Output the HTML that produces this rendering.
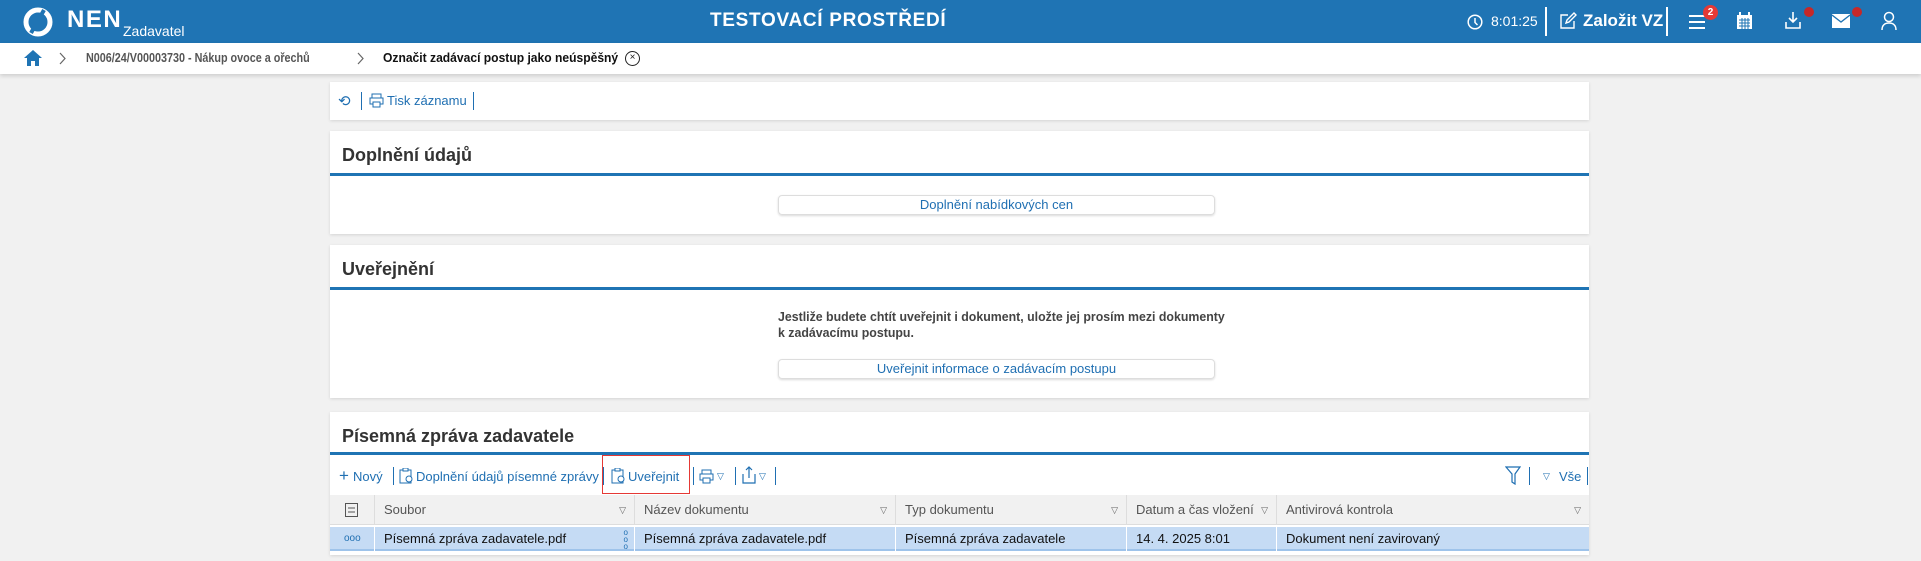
<!DOCTYPE html>
<html><head><meta charset="utf-8"><style>
*{box-sizing:border-box;margin:0;padding:0}
body{width:1921px;height:561px;background:#f1f1f1;font-family:"Liberation Sans Narrow","Liberation Sans",sans-serif;position:relative;overflow:hidden;color:#222}
.a{position:absolute;white-space:nowrap}
#hdr{position:absolute;left:0;top:0;width:1921px;height:43px;background:#1f74b4}
#bc{position:absolute;left:0;top:43px;width:1921px;height:31px;background:#fff;box-shadow:0 2px 4px rgba(0,0,0,.15)}
.panel{position:absolute;left:330px;width:1259px;background:#fff;box-shadow:0 1px 3px rgba(0,0,0,.12)}
.title{position:absolute;left:12px;font-size:18px;font-weight:bold;color:#333}
.bl{position:absolute;left:0;width:1259px;height:3px;background:#1f74b4}
.btn{position:absolute;left:448px;width:437px;height:20px;border:1px solid #ddd;border-radius:4px;box-shadow:0 1px 2px rgba(0,0,0,.15);text-align:center;font-size:13px;line-height:18px;color:#1f6fb2}
.blue{color:#1f6fb2}
.th{position:absolute;top:0;height:30px;border-right:1px solid #ddd;font-size:13px;color:#555;line-height:30px;padding-left:9px}
.td{position:absolute;top:0;height:24px;border-right:1px solid #fff;font-size:13px;color:#111;line-height:24px;padding-left:9px}
.tri{position:absolute;right:8px;font-size:9px;color:#666}
</style></head><body>
<div id="hdr">
 <svg class="a" style="left:23px;top:7px" width="30" height="30" viewBox="0 0 30 30"><circle cx="15" cy="15" r="12" fill="none" stroke="#fff" stroke-width="5"/><path d="M8 26 L21 3" stroke="#1f74b4" stroke-width="4"/></svg>
 <div class="a" style="left:67px;top:6px;color:#fff;font-size:24px;font-weight:bold;letter-spacing:1.5px;font-family:'Liberation Sans',sans-serif">NEN</div>
 <div class="a" style="left:123px;top:23px;color:#fff;font-size:14px">Zadavatel</div>
 <div class="a" style="left:710px;top:10px;color:#fff;font-size:19px;font-weight:bold;font-family:'Liberation Sans',sans-serif;letter-spacing:.7px">TESTOVACÍ PROSTŘEDÍ</div>
 <svg class="a" style="left:1467px;top:14px" width="16" height="16" viewBox="0 0 16 16"><circle cx="8" cy="8" r="6.8" fill="none" stroke="#fff" stroke-width="1.5"/><path d="M8 4v4.5l2.5 2.5" fill="none" stroke="#fff" stroke-width="1.5"/></svg>
 <div class="a" style="left:1491px;top:13px;color:#fff;font-size:14px">8:01:25</div>
 <div class="a" style="left:1545px;top:7px;width:2px;height:29px;background:#fff"></div>
 <svg class="a" style="left:1559px;top:12px" width="18" height="18" viewBox="0 0 18 18"><path d="M9 3H2v13h13V9M7 11l1-3 7-7 2 2-7 7z" fill="none" stroke="#fff" stroke-width="1.4"/></svg>
 <div class="a" style="left:1583px;top:11px;color:#fff;font-size:17px;font-weight:bold;font-family:'Liberation Sans',sans-serif">Založit VZ</div>
 <div class="a" style="left:1666px;top:7px;width:2px;height:29px;background:#fff"></div>
 <svg class="a" style="left:1688px;top:14px" width="18" height="16"><path d="M1 2h16M1 8h16M1 14h16" stroke="#fff" stroke-width="2"/></svg>
 <div class="a" style="left:1703px;top:5px;width:15px;height:15px;border-radius:50%;background:#e53935;color:#fff;font-size:10px;font-weight:bold;text-align:center;line-height:15px;font-family:'Liberation Sans'">2</div>
 <svg class="a" style="left:1736px;top:12px" width="17" height="18"><rect x="1" y="3" width="15" height="14" fill="#fff"/><path d="M4 0v4M13 0v4" stroke="#fff" stroke-width="2"/><path d="M3 8h11M3 11h11M3 14h11M6 6v11M9 6v11M12 6v11" stroke="#1f74b4" stroke-width="1"/></svg>
 <svg class="a" style="left:1784px;top:11px" width="18" height="19"><path d="M9 1v10M5 7l4 4 4-4M2 11v6h14v-6" fill="none" stroke="#fff" stroke-width="1.6"/></svg>
 <div class="a" style="left:1804px;top:7px;width:10px;height:10px;border-radius:50%;background:#c62828"></div>
 <svg class="a" style="left:1832px;top:14px" width="18" height="14"><rect x="0" y="0" width="18" height="14" fill="#fff"/><path d="M0 1l9 7 9-7" fill="none" stroke="#1f74b4" stroke-width="1.3"/></svg>
 <div class="a" style="left:1852px;top:7px;width:10px;height:10px;border-radius:50%;background:#c62828"></div>
 <svg class="a" style="left:1881px;top:11px" width="16" height="19"><circle cx="8" cy="6" r="4.5" fill="none" stroke="#fff" stroke-width="1.5"/><path d="M1 19c0-5 3-7 7-7s7 2 7 7" fill="none" stroke="#fff" stroke-width="1.5"/></svg>
</div>
<div id="bc">
 <svg class="a" style="left:24px;top:7px" width="18" height="16"><path d="M9 0L0 8h3v8h4v-5h4v5h4V8h3z" fill="#1f74b4"/></svg>
 <svg class="a" style="left:59px;top:9px" width="8" height="13"><path d="M1 1l5 5.5L1 12" fill="none" stroke="#666" stroke-width="1.2"/></svg>
 <div class="a" style="left:86px;top:7px;font-size:13px;color:#555;font-weight:bold;transform:scaleX(.83);transform-origin:left">N006/24/V00003730 - Nákup ovoce a ořechů</div>
 <svg class="a" style="left:357px;top:9px" width="8" height="13"><path d="M1 1l5 5.5L1 12" fill="none" stroke="#666" stroke-width="1.2"/></svg>
 <div class="a" style="left:383px;top:7px;font-size:13px;color:#111;font-weight:bold;transform:scaleX(.93);transform-origin:left">Označit zadávací postup jako neúspěšný</div>
 <div class="a" style="left:625px;top:8px;width:15px;height:15px;border:1.5px solid #222;border-radius:50%;font-size:10px;text-align:center;line-height:12px">×</div>
</div>
<div class="panel" style="top:82px;height:38px">
 <div class="a blue" style="left:8px;top:10px;font-size:15px">⟲</div>
 <div class="a" style="left:31px;top:10px;width:1px;height:18px;background:#1f6fb2"></div>
 <svg class="a" style="left:39px;top:11px" width="15" height="15"><rect x="3" y="1" width="9" height="4" fill="none" stroke="#1f6fb2"/><rect x="1" y="5" width="13" height="6" fill="none" stroke="#1f6fb2"/><rect x="4" y="9" width="7" height="5" fill="#fff" stroke="#1f6fb2"/></svg>
 <div class="a blue" style="left:57px;top:11px;font-size:13px">Tisk záznamu</div>
 <div class="a" style="left:143px;top:10px;width:1px;height:18px;background:#1f6fb2"></div>
</div>
<div class="panel" style="top:131px;height:103px">
 <div class="title" style="top:14px">Doplnění údajů</div>
 <div class="bl" style="top:42px"></div>
 <div class="btn" style="top:64px">Doplnění nabídkových cen</div>
</div>
<div class="panel" style="top:245px;height:153px">
 <div class="title" style="top:14px">Uveřejnění</div>
 <div class="bl" style="top:42px"></div>
 <div class="a" style="left:448px;top:64px;font-size:13px;color:#444;font-weight:bold;line-height:16px;transform:scaleX(.95);transform-origin:left">Jestliže budete chtít uveřejnit i dokument, uložte jej prosím mezi dokumenty<br>k zadávacímu postupu.</div>
 <div class="btn" style="top:114px">Uveřejnit informace o zadávacím postupu</div>
</div>
<div class="panel" style="top:412px;height:143px">
 <div class="title" style="top:14px">Písemná zpráva zadavatele</div>
 <div class="bl" style="top:40px"></div>
 <div class="a blue" style="left:9px;top:54px;font-size:17px">+</div>
 <div class="a blue" style="left:23px;top:57px;font-size:13px">Nový</div>
 <div class="a" style="left:63px;top:55px;width:1px;height:18px;background:#1f6fb2"></div>
 <svg class="a" style="left:69px;top:56px" width="15" height="16"><rect x="1" y="2" width="11" height="13" fill="none" stroke="#1f6fb2"/><rect x="4" y="0" width="5" height="3" fill="#fff" stroke="#1f6fb2"/><circle cx="10" cy="11" r="3" fill="#fff" stroke="#1f6fb2"/></svg>
 <div class="a blue" style="left:86px;top:57px;font-size:13px">Doplnění údajů písemné zprávy</div>
 <div class="a" style="left:273px;top:55px;width:1px;height:18px;background:#1f6fb2"></div>
 <div class="a" style="left:272px;top:43px;width:88px;height:39px;border:1px solid #e53935"></div>
 <svg class="a" style="left:281px;top:56px" width="15" height="16"><rect x="1" y="2" width="11" height="13" fill="none" stroke="#1f6fb2"/><rect x="4" y="0" width="5" height="3" fill="#fff" stroke="#1f6fb2"/><circle cx="10" cy="11" r="3" fill="#fff" stroke="#1f6fb2"/></svg>
 <div class="a blue" style="left:298px;top:57px;font-size:13px">Uveřejnit</div>
 <div class="a" style="left:363px;top:55px;width:1px;height:18px;background:#1f6fb2"></div>
 <svg class="a" style="left:369px;top:57px" width="15" height="15"><rect x="3" y="1" width="9" height="4" fill="none" stroke="#1f6fb2"/><rect x="1" y="5" width="13" height="6" fill="none" stroke="#1f6fb2"/><rect x="4" y="9" width="7" height="5" fill="#fff" stroke="#1f6fb2"/></svg>
 <div class="a blue" style="left:387px;top:59px;font-size:9px">▽</div>
 <div class="a" style="left:405px;top:55px;width:1px;height:18px;background:#1f6fb2"></div>
 <svg class="a" style="left:412px;top:54px" width="14" height="18"><path d="M1 8v9h12V8M7 12V1M4 4l3-3 3 3" fill="none" stroke="#1f6fb2" stroke-width="1.2"/></svg>
 <div class="a blue" style="left:429px;top:59px;font-size:9px">▽</div>
 <div class="a" style="left:445px;top:55px;width:1px;height:18px;background:#1f6fb2"></div>
 <svg class="a" style="left:1175px;top:54px" width="16" height="19"><path d="M1 1h14l-5 7v10l-3-2V8z" fill="none" stroke="#1f6fb2" stroke-width="1.2"/></svg>
 <div class="a" style="left:1199px;top:55px;width:1px;height:18px;background:#1f6fb2"></div>
 <div class="a blue" style="left:1213px;top:59px;font-size:9px">▽</div>
 <div class="a blue" style="left:1229px;top:57px;font-size:13px">Vše</div>
 <div class="a" style="left:1257px;top:55px;width:1px;height:18px;background:#1f6fb2"></div>
 <div class="a" style="left:0;top:83px;width:1259px;height:30px;background:#f1f1f1;border-bottom:1px solid #ddd">
  <div class="th" style="left:0;width:45px"><svg style="position:absolute;left:15px;top:8px" width="13" height="14"><rect x=".5" y=".5" width="12" height="13" fill="none" stroke="#555"/><path d="M3 5h7M3 9h7" stroke="#555"/></svg></div>
  <div class="th" style="left:45px;width:260px">Soubor<span class="tri">▽</span></div>
  <div class="th" style="left:305px;width:261px">Název dokumentu<span class="tri">▽</span></div>
  <div class="th" style="left:566px;width:231px">Typ dokumentu<span class="tri">▽</span></div>
  <div class="th" style="left:797px;width:150px">Datum a čas vložení<span class="tri">▽</span></div>
  <div class="th" style="left:947px;width:312px;border-right:0">Antivirová kontrola<span class="tri">▽</span></div>
 </div>
 <div class="a" style="left:0;top:115px;width:1259px;height:24px;background:#c5dbf4;border-bottom:2px solid #9ec3ea">
  <div class="td" style="left:0;width:45px;color:#1f6fb2;font-size:10px;padding-left:14px">ooo</div>
  <div class="td" style="left:45px;width:260px">Písemná zpráva zadavatele.pdf<span style="position:absolute;right:6px;top:0;color:#1f6fb2;font-size:8px;line-height:7px;padding-top:2px">o<br>o<br>o</span></div>
  <div class="td" style="left:305px;width:261px">Písemná zpráva zadavatele.pdf</div>
  <div class="td" style="left:566px;width:231px">Písemná zpráva zadavatele</div>
  <div class="td" style="left:797px;width:150px">14. 4. 2025 8:01</div>
  <div class="td" style="left:947px;width:312px;border-right:0">Dokument není zavirovaný</div>
 </div>
</div>
</body></html>
